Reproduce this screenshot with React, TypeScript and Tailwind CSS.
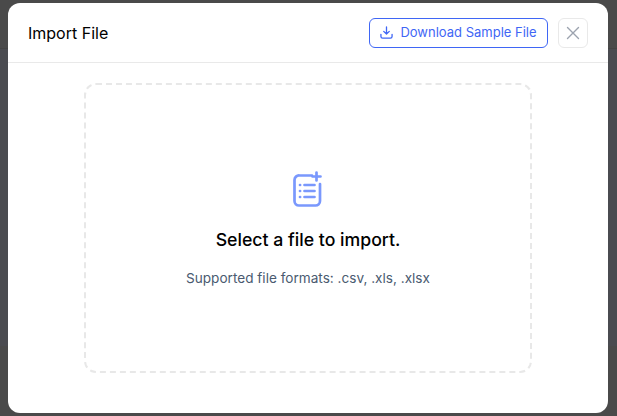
import React from "react";

function ImportIcon() {
  return (
    <svg width="32" height="36" viewBox="0 0 32 36" fill="none" stroke="#7a98fd" strokeWidth="2.7" strokeLinecap="round">
      <path d="M20 4.5H7.5A4.5 4.5 0 0 0 2.5 9v21a4.5 4.5 0 0 0 4.5 4.5h16.5A4.5 4.5 0 0 0 28 30V13" />
      <path d="M24.5 1.5v8M20.5 5.5h8" />
      <path d="M12.5 14h10M12.5 20h10M12.5 26h10" />
      <path d="M8 14h.1M8 20h.1M8 26h.1" />
    </svg>
  );
}

export default function App() {
  return (
    <div className="relative flex h-[416px] w-[617px] flex-col overflow-hidden bg-[#4a4a4a]" style={{ fontFamily: "Inter, 'Liberation Sans', sans-serif" }}>
      <div className="h-[49px] border-b border-[#444444] bg-[#4a4a4a]" />
      <div className="flex-1 bg-[#4a4b50]" />
      <div className="h-[70px] bg-[#4a4a4a]" />
      <div className="absolute left-[8px] top-[3px] flex h-[410px] w-[600px] flex-col rounded-[12px] bg-white">
        <div className="flex h-[60px] items-center justify-between border-b border-[#e9e9e9] pl-[20px] pr-[20px]">
          <span className="text-[16px] text-[#000000]">Import File</span>
          <div className="flex items-center gap-[10px]">
            <button className="flex h-[30px] w-[179px] items-center justify-center gap-[7px] rounded-[6px] border border-[#3f66f5] text-[13px] text-[#3f66f5]">
              <svg width="13" height="13" viewBox="0 0 14 14" fill="none" stroke="#3f66f5" strokeWidth="1.4" strokeLinecap="round" strokeLinejoin="round">
                <path d="M7 1v7.5M4 5.8 7 8.7l3-2.9" />
                <path d="M1 9v2.2A1.8 1.8 0 0 0 2.8 13h8.4a1.8 1.8 0 0 0 1.8-1.8V9" />
              </svg>
              Download Sample File
            </button>
            <button className="flex h-[30px] w-[30px] items-center justify-center rounded-[6px] border border-[#e9e9e9]">
              <svg width="14" height="14" viewBox="0 0 14 14" fill="none" stroke="#9ca3af" strokeWidth="1.4" strokeLinecap="round">
                <path d="M1.5 1.5l11 11M12.5 1.5l-11 11" />
              </svg>
            </button>
          </div>
        </div>
        <div className="flex flex-1 justify-center pt-[20px]">
          <div className="flex h-[290px] w-[448px] flex-col items-center rounded-[12px] border-2 border-dashed border-[#e8e8e8] pt-[86px]">
            <ImportIcon />
            <div className="mt-[21px] text-[17.7px] font-medium leading-[24px] text-[#000000]">Select a file to import.</div>
            <div className="mt-[16px] text-[13.6px] leading-[20px] text-[#4a5a70]">Supported file formats: .csv, .xls, .xlsx</div>
          </div>
        </div>
      </div>
    </div>
  );
}
